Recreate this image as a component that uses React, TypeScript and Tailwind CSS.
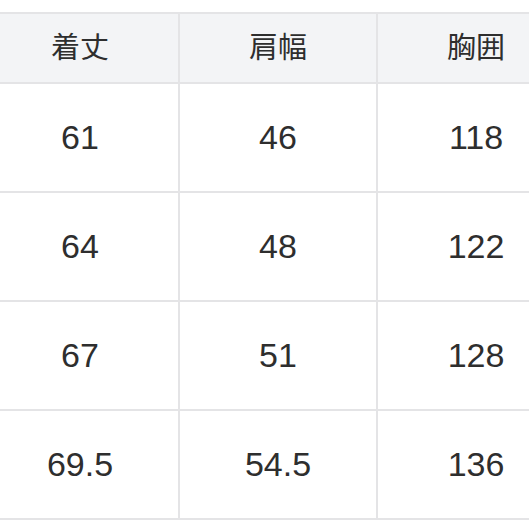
import React from "react";

const headers = ["着丈", "肩幅", "胸囲"];
const rows = [
  ["61", "46", "118"],
  ["64", "48", "122"],
  ["67", "51", "128"],
  ["69.5", "54.5", "136"],
];

export default function App() {
  return (
    <div
      className="w-[529px] h-[529px] overflow-hidden bg-white pt-[12px]"
      style={{ fontFamily: '"Noto Sans CJK JP", "Noto Sans", sans-serif' }}
    >
      <div className="w-[600px] -ml-[20px] grid grid-cols-[198px_198px_198px] border-t-2 border-l-2 border-[#e4e4e6] text-[#2e2e2e]">
        {headers.map((h) => (
          <div
            key={h}
            className="h-[70px] flex items-center justify-center bg-[#f3f4f6] border-r-2 border-b-2 border-[#e4e4e6] text-[29px] pb-[4px]"
          >
            {h}
          </div>
        ))}
        {rows.map((r, i) =>
          r.map((c, j) => (
            <div
              key={`${i}-${j}`}
              className="h-[109px] flex items-center justify-center border-r-2 border-b-2 border-[#e4e4e6] text-[34px] font-['Liberation_Sans',sans-serif]"
            >
              {c}
            </div>
          ))
        )}
      </div>
    </div>
  );
}
